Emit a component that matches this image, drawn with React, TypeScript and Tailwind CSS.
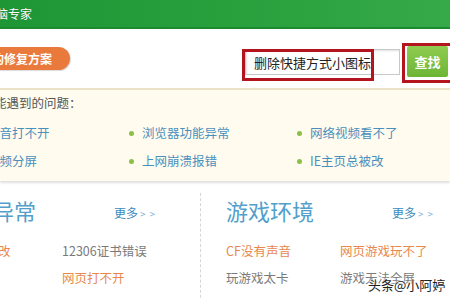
import React from "react";

const Bullet = ({ text }: { text: string }) => (
  <div className="flex items-center gap-[8px]">
    <span className="w-[5px] h-[5px] rounded-full bg-[#8cbf45] shrink-0" />
    <span className="text-[#4a90bd] whitespace-nowrap">{text}</span>
  </div>
);

const Section = ({
  title,
  rows,
}: {
  title: string;
  rows: { t: string; c: string }[][];
}) => (
  <div className="w-[228px] shrink-0 flex flex-col">
    <div className="flex items-center h-[28px] mt-[15px]">
      <span className="text-[22px] leading-[28px] text-[#529fcb] whitespace-nowrap w-[166px]">{title}</span>
      <span className="text-[12px] text-[#3b8cbc] mt-[6px] whitespace-nowrap">
        更多<span className="text-[#7fb3d3] tracking-[4px] text-[10px] ml-[2px]">{">>"}</span>
      </span>
    </div>
    <div className="flex flex-col gap-[11px] mt-[19px] text-[12.5px] leading-[16px]">
      {rows.map((r, i) => (
        <div key={i} className="flex">
          {r.map((cell, j) => (
            <span key={j} className={`w-[117px] whitespace-nowrap ${cell.c}`}>{cell.t}</span>
          ))}
        </div>
      ))}
    </div>
  </div>
);

export default function App() {
  const orange = "text-[#e8884c]";
  const gray = "text-[#7a7a7a]";
  return (
    <div
      className="w-[450px] h-[300px] overflow-hidden bg-white relative"
      style={{ fontFamily: '"Noto Sans CJK SC", "Noto Sans", sans-serif' }}
    >
      {/* header */}
      <div className="h-[29px] bg-gradient-to-r from-[#1f9636] via-[#28a03c] to-[#36a948] border-b-[2px] border-[#1c8a31] flex items-center">
        <span className="ml-[-16px] text-white text-[12px] leading-none [text-shadow:0_0_1px_rgba(0,0,0,0.3)]">电脑专家</span>
      </div>
      {/* top search area */}
      <div className="h-[59px] flex items-start">
        <div className="ml-[-20px] mt-[18px] h-[23px] w-[90px] rounded-r-full bg-[#ea7a3c] flex items-center pl-[17px] shadow-[1px_1px_1px_rgba(0,0,0,0.15)]">
          <span className="text-white text-[12px] font-bold whitespace-nowrap leading-none ml-[-5px]">的修复方案</span>
        </div>
        <div className="ml-[175px] mt-[20px] h-[26px] w-[155px] border border-[#c9c9c9] bg-white shadow-[inset_1px_1px_2px_rgba(0,0,0,0.12)] flex items-center pl-[8px]">
          <span className="text-[13px] text-[#222] whitespace-nowrap leading-none">删除快捷方式小图标</span>
          <span className="w-[1px] h-[16px] bg-black ml-[1px]" />
        </div>
        <div className="ml-[7px] mt-[17px] h-[31px] w-[41px] rounded-[2px] bg-gradient-to-b from-[#8fcb4e] to-[#6db536] flex items-center justify-center">
          <span className="text-white text-[13px] font-semibold leading-none">查找</span>
        </div>
      </div>
      {/* problems panel */}
      <div className="h-[93px] bg-[#fffbee] border-t-[2px] border-[#ebe2c8] shadow-[0_2px_2px_rgba(0,0,0,0.12)] pt-[5px] text-[12.5px] leading-[16px]">
        <div className="ml-[-31px] text-[#555] whitespace-nowrap">您可能遇到的问题：</div>
        <div className="flex mt-[14px]">
          <div className="ml-[-26px] w-[155px] shrink-0"><Bullet text="声音打不开" /></div>
          <div className="w-[168px] shrink-0"><Bullet text="浏览器功能异常" /></div>
          <div className="shrink-0"><Bullet text="网络视频看不了" /></div>
        </div>
        <div className="flex mt-[12px]">
          <div className="ml-[-26px] w-[155px] shrink-0"><Bullet text="视频分屏" /></div>
          <div className="w-[168px] shrink-0"><Bullet text="上网崩溃报错" /></div>
          <div className="shrink-0"><Bullet text="IE主页总被改" /></div>
        </div>
      </div>
      {/* lower */}
      <div className="flex ml-[-52px]">
        <Section
          title="网络异常"
          rows={[
            [{ t: "主页被篡改", c: orange }, { t: "12306证书错误", c: gray }],
            [{ t: "", c: gray }, { t: "网页打不开", c: orange }],
          ]}
        />
        <div className="w-[50px] shrink-0 flex">
          <div className="ml-[24px] mt-[12px] h-[110px] border-l border-dashed border-[#d6d6d6]" />
        </div>
        <Section
          title="游戏环境"
          rows={[
            [{ t: "CF没有声音", c: orange }, { t: "网页游戏玩不了", c: orange }],
            [{ t: "玩游戏太卡", c: gray }, { t: "游戏无法全屏", c: gray }],
          ]}
        />
      </div>
      {/* annotations */}
      <div className="absolute left-[242px] top-[49px] w-[132px] h-[32px] border-[3px] border-[#b3141e]" />
      <div className="absolute left-[402px] top-[43px] w-[60px] h-[40px] border-[3px] border-[#b3141e]" />
      <div className="absolute left-[368px] top-[277px] text-[13px] leading-[16px] text-[#222] whitespace-nowrap [text-shadow:0_0_2px_#fff,0_0_2px_#fff,0_0_3px_#fff]">
        头条@小阿婷
      </div>
    </div>
  );
}
